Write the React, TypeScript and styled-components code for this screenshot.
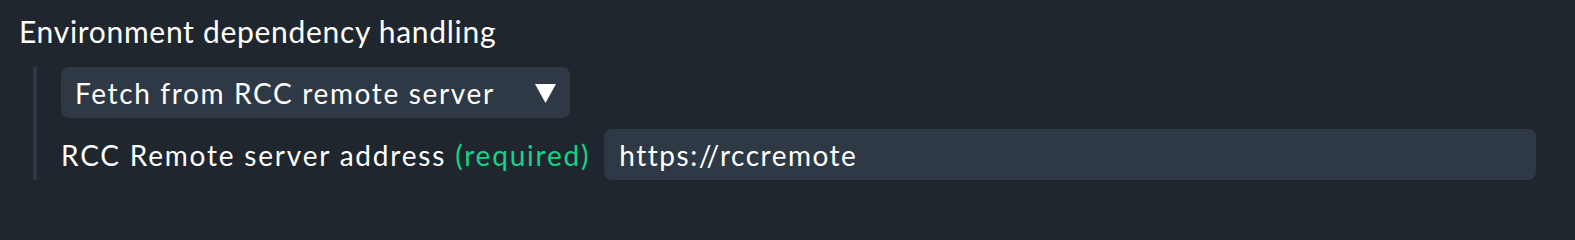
import React from 'react';
import styled, { createGlobalStyle } from 'styled-components';

const colors = {
  page: '#20262e',
  field: '#2e3945',
  bar: '#2e3945',
  text: '#ffffff',
  green: '#13d389',
};

const GlobalStyle = createGlobalStyle`
  html, body {
    margin: 0;
    padding: 0;
    background: ${colors.page};
  }
  body {
    font-family: Lato, "Open Sans", sans-serif;
    color: ${colors.text};
  }
`;

const Page = styled.div`
  height: 201px;
  box-sizing: border-box;
  padding: 13px 39px 0 19px;
`;

const Title = styled.div`
  font-size: 30px;
  line-height: 36px;
  letter-spacing: 0.7px;
`;

const Nested = styled.div`
  margin: 18px 0 0 14px;
  border-left: 4px solid ${colors.bar};
  padding-left: 24px;
  display: flex;
  flex-direction: column;
  gap: 11px;
`;

const Select = styled.div`
  align-self: flex-start;
  display: flex;
  align-items: center;
  gap: 40px;
  box-sizing: border-box;
  height: 51px;
  padding: 9px 14px 8px 14px;
  border-radius: 8px;
  background: ${colors.field};
  font-size: 28px;
  line-height: 34px;
  letter-spacing: 1.65px;
`;

const Arrow = styled.svg`
  width: 21px;
  height: 19px;
  flex: none;
`;

const Row = styled.div`
  display: flex;
  align-items: center;
  gap: 14px;
`;

const Label = styled.span`
  font-size: 28px;
  line-height: 34px;
  letter-spacing: 1.8px;
  white-space: nowrap;
`;

const Required = styled.span`
  color: ${colors.green};
`;

const Input = styled.div`
  flex: 1;
  box-sizing: border-box;
  height: 51px;
  padding: 9px 14px 8px 15px;
  border-radius: 8px;
  background: ${colors.field};
  font-size: 28px;
  line-height: 34px;
  letter-spacing: 1.5px;
`;

export default function App() {
  return (
    <>
      <GlobalStyle />
      <Page>
        <Title>Environment dependency handling</Title>
        <Nested>
          <Select>
            <span>Fetch from RCC remote server</span>
            <Arrow viewBox="0 0 21 19">
              <polygon points="0,0 21,0 10.5,19" fill="#ffffff" />
            </Arrow>
          </Select>
          <Row>
            <Label>
              RCC Remote server address <Required>(required)</Required>
            </Label>
            <Input>https://rccremote</Input>
          </Row>
        </Nested>
      </Page>
    </>
  );
}
